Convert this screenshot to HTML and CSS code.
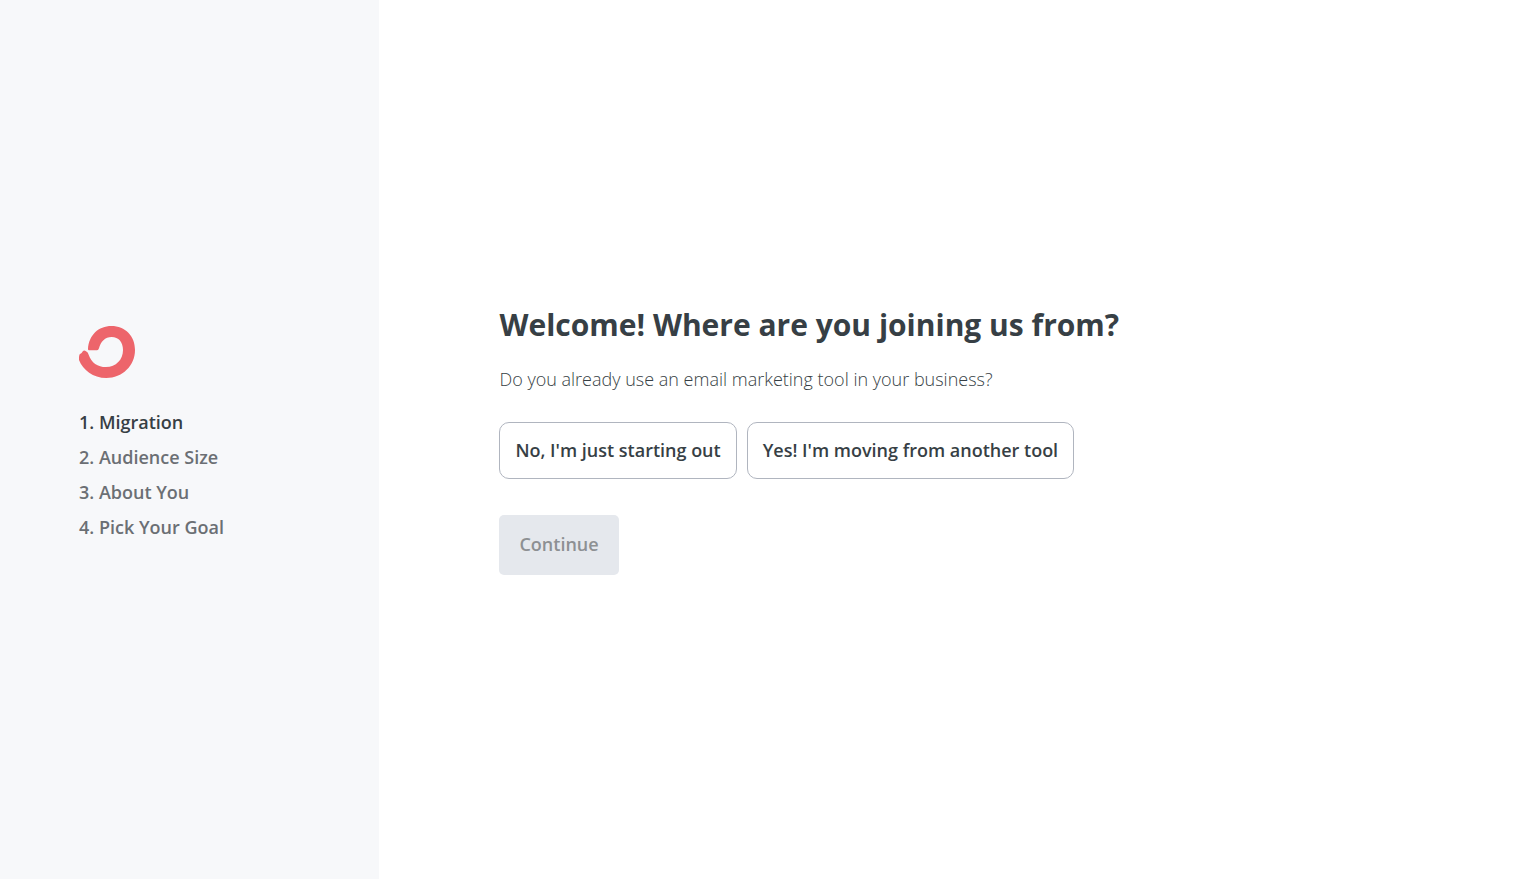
FILE: index.html
```html
<!DOCTYPE html>
<html lang="en">
<head>
<meta charset="utf-8">
<meta name="viewport" content="width=device-width, initial-scale=1">
<title>Welcome</title>
<link rel="stylesheet" href="styles.css">
</head>
<body>
<div class="layout">
  <aside class="sidebar">
    <svg class="logo" viewBox="0 0 168 156" role="img" aria-label="Logo">
      <path d="M27 70C29 27 59 0 97 0C139 0 168 30 168 72C168 119 130 156 82 156C42 156 12 132 0 102Q-1 92 2 85Q8 83 12 75Q16 71 21 76Q27 78 29 86C37 110 56 123 81 123C111 123 132 101 132 72C132 49 119 33 98 33C78 33 65 47 60 67Q58 73 54 73H30Q27 73 27 70Z"/>
    </svg>
    <ol class="steps">
      <li class="step step-current" aria-current="step">1. Migration</li>
      <li class="step">2. Audience Size</li>
      <li class="step">3. About You</li>
      <li class="step">4. Pick Your Goal</li>
    </ol>
  </aside>
  <main class="content">
    <h1 class="title">Welcome! Where are you joining us from?</h1>
    <p class="question">Do you already use an email marketing tool in your business?</p>
    <div class="options">
      <button class="option" type="button">No, I'm just starting out</button>
      <button class="option" type="button">Yes! I'm moving from another tool</button>
    </div>
    <button class="continue" type="button" disabled>Continue</button>
  </main>
</div>
</body>
</html>
```
FILE: styles.css
```css
* {
  box-sizing: border-box;
}

body {
  margin: 0;
  background: #fff;
  color: #373f45;
  font-family: "Open Sans", sans-serif;
  font-size: 18px;
  line-height: 27px;
}

.layout {
  display: flex;
  min-height: 100vh;
}

.sidebar {
  display: flex;
  flex-direction: column;
  justify-content: center;
  flex: 0 0 24.8%;
  padding: 0 32px 0 79px;
  background: #f7f8fa;
}

.logo {
  width: 56px;
  height: 52px;
  fill: #ed656b;
}

.steps {
  display: flex;
  flex-direction: column;
  gap: 8px;
  margin: 31px 0 0;
  padding: 0 0 12px;
  list-style: none;
}

.step {
  color: #6b6f74;
  font-weight: 600;
}

.step-current {
  color: #373f45;
}

.content {
  display: flex;
  flex: 1;
  flex-direction: column;
  align-items: flex-start;
  justify-content: center;
  padding: 0 120px;
}

.title {
  margin: 0;
  font-size: 30px;
  font-weight: 700;
  line-height: 42px;
}

.question {
  margin: 20px 0 29px;
  font-weight: 300;
}

.options {
  display: flex;
  flex-wrap: wrap;
  gap: 10px;
}

.option,
.continue {
  font: inherit;
  font-weight: 600;
}

.option {
  padding: 14px 15px;
  border: 1px solid #b0b5bf;
  border-radius: 10px;
  background: #fff;
  color: #373f45;
  cursor: pointer;
}

.continue {
  margin-top: 36px;
  padding: 16px 20px 17px;
  border: 0;
  border-radius: 5px;
  background: #e5e8ed;
  color: #8d9093;
}
```
